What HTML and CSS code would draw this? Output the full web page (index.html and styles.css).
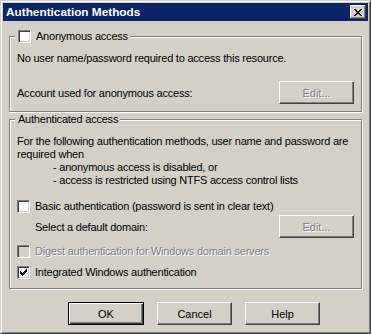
FILE: index.html
```html
<!DOCTYPE html>
<html lang="en">
<head>
    <meta charset="UTF-8">
    <title>Authentication Methods</title>
    <link rel="stylesheet" href="styles.css">
</head>
<body>

<div class="window">
    <div class="titlebar">
        <span class="title">Authentication Methods</span>
        <button class="close-btn" aria-label="Close">
            <svg width="8" height="7" viewBox="0 0 8 7" shape-rendering="crispEdges">
                <path d="M0 0h2v1h-2z M6 0h2v1h-2z M1 1h2v1h-2z M5 1h2v1h-2z M2 2h4v1h-4z M3 3h2v1h-2z M2 4h4v1h-4z M1 5h2v1h-2z M5 5h2v1h-2z M0 6h2v1h-2z M6 6h2v1h-2z" fill="#000"/>
            </svg>
        </button>
    </div>

    <div class="content">
        <fieldset class="group group-anon">
            <legend><span class="option"><span class="check"></span>Anonymous access</span></legend>
            <p class="note">No user name/password required to access this resource.</p>
            <div class="field-row">
                <span>Account used for anonymous access:</span>
                <button class="button" disabled>Edit...</button>
            </div>
        </fieldset>

        <fieldset class="group group-auth">
            <legend>Authenticated access</legend>
            <p class="intro">For the following authentication methods, user name and password are<br>required when</p>
            <ul class="conditions">
                <li>- anonymous access is disabled, or</li>
                <li>- access is restricted using NTFS access control lists</li>
            </ul>
            <div class="option basic"><span class="check"></span>Basic authentication (password is sent in clear text)</div>
            <div class="field-row domain">
                <span>Select a default domain:</span>
                <button class="button" disabled>Edit...</button>
            </div>
            <div class="option digest disabled"><span class="check"></span>Digest authentication for Windows domain servers</div>
            <div class="option integrated">
                <span class="check">
                    <svg width="7" height="7" viewBox="0 0 7 7" shape-rendering="crispEdges">
                        <path d="M6 0h1v3h-1z M5 1h1v3h-1z M4 2h1v3h-1z M3 3h1v3h-1z M2 4h1v3h-1z M1 3h1v3h-1z M0 2h1v3h-1z" fill="#000"/>
                    </svg>
                </span>Integrated Windows authentication
            </div>
        </fieldset>

        <div class="actions">
            <button class="button default">OK</button>
            <button class="button">Cancel</button>
            <button class="button">Help</button>
        </div>
    </div>
</div>

</body>
</html>
```

FILE: styles.css
```css
body {
    margin: 0;
    font-family: 'Liberation Sans', Arial, sans-serif;
    font-size: 11px;
    letter-spacing: -0.22px;
    color: #000;
    background-color: #d4d0c8;
}

.window {
    width: 371px;
    height: 334px;
    box-sizing: border-box;
    padding: 2px;
    background-color: #d4d0c8;
    border: 1px solid;
    border-color: #d4d0c8 #404040 #404040 #d4d0c8;
    box-shadow: inset 1px 1px #fff, inset -1px -1px #808080;
}

.titlebar {
    height: 18px;
    display: flex;
    align-items: center;
    justify-content: space-between;
    padding: 0 2px 0 3px;
    background-color: #0a246a;
    color: #fff;
    font-size: 11.8px;
    font-weight: bold;
    letter-spacing: 0;
}

.close-btn {
    width: 16px;
    height: 14px;
    padding: 0;
    border: none;
    display: flex;
    align-items: center;
    justify-content: center;
    background-color: #d4d0c8;
    box-shadow: inset -1px -1px #404040, inset 1px 1px #fff, inset -2px -2px #808080;
}

.content {
    padding: 9px 6px 0;
}

.group {
    margin: 0;
    padding: 0 7px 7px;
    min-width: 0;
    border: 1px solid #808080;
    box-shadow: inset 1px 1px #fff, 1px 1px #fff;
}

.group legend {
    margin-left: -2px;
    padding: 0 2px 0 3px;
    line-height: 13px;
    background-color: #d4d0c8;
}

.group-auth {
    margin-top: 1px;
    padding-bottom: 9px;
}

.option {
    display: flex;
    align-items: center;
    gap: 5px;
    height: 13px;
    line-height: 13px;
    white-space: nowrap;
}

.check {
    width: 13px;
    height: 13px;
    box-sizing: border-box;
    display: flex;
    align-items: center;
    justify-content: center;
    background-color: #fff;
    border: 1px solid;
    border-color: #808080 #fff #fff #808080;
    box-shadow: inset 1px 1px #404040, inset -1px -1px #d4d0c8;
}

.note, .intro {
    margin: 9px 0 0;
    line-height: 13px;
    white-space: nowrap;
}

.conditions {
    margin: 0;
    padding: 0 0 0 36px;
    list-style: none;
    line-height: 13px;
}

.field-row {
    display: flex;
    align-items: center;
    justify-content: space-between;
    height: 23px;
    margin-top: 16px;
}

.basic {
    margin-top: 13px;
}

.domain {
    margin-top: 2px;
    padding-left: 18px;
}

.digest {
    margin-top: 7px;
}

.integrated {
    margin-top: 8px;
}

.disabled {
    color: #808080;
    text-shadow: 1px 1px #fff;
}

.disabled .check {
    background-color: #d4d0c8;
}

.button {
    width: 75px;
    height: 23px;
    padding: 0;
    font: inherit;
    color: #000;
    background-color: #d4d0c8;
    border: 1px solid;
    border-color: #fff #404040 #404040 #fff;
    box-shadow: inset -1px -1px #808080;
}

.button:disabled {
    color: #808080;
    text-shadow: 1px 1px #fff;
}

.button.default {
    width: 76px;
    border: 1px solid #000;
    box-shadow: inset 1px 1px #fff, inset -1px -1px #404040, inset -2px -2px #808080;
}

.actions {
    display: flex;
    gap: 13px;
    margin-top: 13px;
    padding-left: 59px;
}
```
